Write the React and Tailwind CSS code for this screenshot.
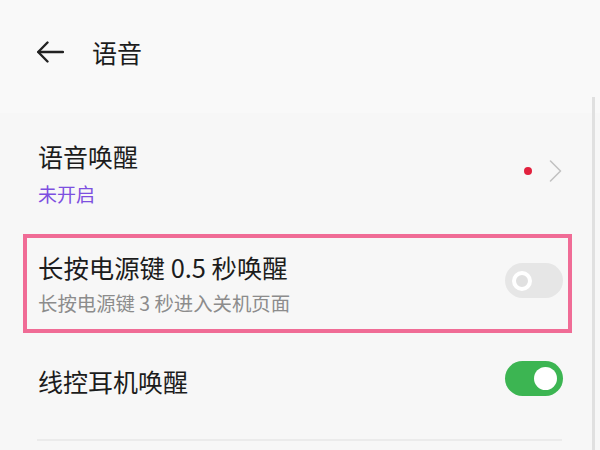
import React from 'react';

const font = { fontFamily: '"Noto Sans CJK SC", "Noto Sans", sans-serif' };

function Toggle({ on }) {
  if (on) {
    return (
      <div className="w-[58px] h-[35px] rounded-full bg-[#3cb552] flex items-center justify-end pr-[6px]">
        <div className="w-[23px] h-[23px] rounded-full bg-white"></div>
      </div>
    );
  }
  return (
    <div className="w-[58px] h-[35px] rounded-full bg-[#e6e6e6] flex items-center pl-[7px]">
      <div className="w-[20px] h-[20px] rounded-full border-4 border-white bg-[#e0e0e0]"></div>
    </div>
  );
}

export default function App() {
  return (
    <div className="relative w-[600px] h-[450px] overflow-hidden bg-[#f7f7f7] text-[#1c1c1c]" style={font}>
      {/* 顶栏 */}
      <div className="h-[113px] bg-[#f9f9f9] pt-[36px] pl-[37px] flex items-start">
        <div className="flex items-center h-[32px]">
          <svg width="27" height="22" viewBox="0 0 27 22" fill="none" stroke="#222" strokeWidth="2.4" strokeLinecap="round" strokeLinejoin="round">
            <path d="M26 11 H1.5" />
            <path d="M10.5 1.5 L1.2 11 L10.5 20.5" />
          </svg>
          <span className="ml-[28px] text-[25px] leading-[32px]">语音</span>
        </div>
      </div>

      {/* 语音唤醒 */}
      <div className="h-[121px] pl-[38px] pr-[38px] flex justify-between">
        <div className="pt-[27px]">
          <div className="text-[25px] leading-[32px]">语音唤醒</div>
          <div className="mt-[9px] text-[19px] leading-[26px] text-[#7d4fe0]">未开启</div>
        </div>
        <div className="flex items-center gap-[17px] pb-[6px]">
          <div className="w-[8px] h-[8px] rounded-full bg-[#e2213e]"></div>
          <svg width="13" height="22" viewBox="0 0 13 22" fill="none" stroke="#c2c2c2" strokeWidth="1.6" strokeLinecap="round" strokeLinejoin="round">
            <path d="M1.5 1 L11.5 11 L1.5 21" />
          </svg>
        </div>
      </div>

      {/* 长按电源键（高亮框） */}
      <div className="mx-[23px] w-[549px] h-[99px] border-4 border-[#f06c96] pl-[11px] pr-[5px] flex items-start justify-between">
        <div className="pt-[13px]">
          <div className="text-[25.4px] leading-[32px]">长按电源键 0.5 秒唤醒</div>
          <div className="mt-[7px] text-[19.4px] leading-[26px] text-[#8c8c8c]">长按电源键 3 秒进入关机页面</div>
        </div>
        <div className="mt-[25px]">
          <Toggle on={false} />
        </div>
      </div>

      {/* 线控耳机唤醒 */}
      <div className="h-[96px] pl-[38px] pr-[37px] flex items-center justify-between">
        <div className="text-[25px] leading-[32px]">线控耳机唤醒</div>
        <div className="mb-[6px]">
          <Toggle on={true} />
        </div>
      </div>
      <div className="ml-[37px] mt-[10px] w-[525px] h-[2px] bg-[#ebebeb]"></div>

      {/* 滚动条 */}
      <div className="absolute right-[5px] top-[97px] bottom-0 w-[3px] bg-[#e0e0e0]"></div>
    </div>
  );
}
